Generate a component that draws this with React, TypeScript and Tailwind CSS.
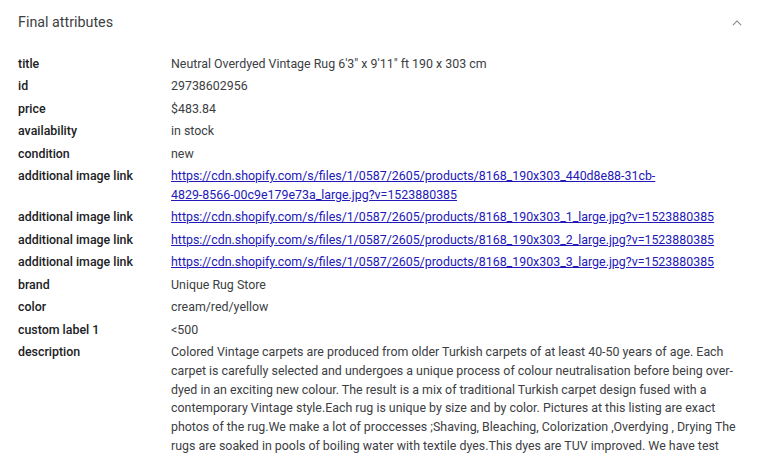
import React from "react";

type Row = { label: string; value: React.ReactNode; link?: boolean };

const rows: Row[] = [
  { label: "title", value: "Neutral Overdyed Vintage Rug 6'3\" x 9'11\" ft 190 x 303 cm" },
  { label: "id", value: "29738602956" },
  { label: "price", value: "$483.84" },
  { label: "availability", value: "in stock" },
  { label: "condition", value: "new" },
  {
    label: "additional image link",
    value: (
      <>
        https://cdn.shopify.com/s/files/1/0587/2605/products/8168_190x303_440d8e88-31cb-
        <br />
        4829-8566-00c9e179e73a_large.jpg?v=1523880385
      </>
    ),
    link: true,
  },
  {
    label: "additional image link",
    value: "https://cdn.shopify.com/s/files/1/0587/2605/products/8168_190x303_1_large.jpg?v=1523880385",
    link: true,
  },
  {
    label: "additional image link",
    value: "https://cdn.shopify.com/s/files/1/0587/2605/products/8168_190x303_2_large.jpg?v=1523880385",
    link: true,
  },
  {
    label: "additional image link",
    value: "https://cdn.shopify.com/s/files/1/0587/2605/products/8168_190x303_3_large.jpg?v=1523880385",
    link: true,
  },
  { label: "brand", value: "Unique Rug Store" },
  { label: "color", value: "cream/red/yellow" },
  { label: "custom label 1", value: "<500" },
  {
    label: "description",
    value:
      "Colored Vintage carpets are produced from older Turkish carpets of at least 40-50 years of age. Each carpet is carefully selected and undergoes a unique process of colour neutralisation before being over-dyed in an exciting new colour. The result is a mix of traditional Turkish carpet design fused with a contemporary Vintage style.Each rug is unique by size and by color. Pictures at this listing are exact photos of the rug.We make a lot of proccesses ;Shaving, Bleaching, Colorization ,Overdying , Drying The rugs are soaked in pools of boiling water with textile dyes.This dyes are TUV improved. We have test",
  },
];

export default function App() {
  return (
    <div
      className="w-[768px] h-[455px] overflow-hidden bg-white"
      style={{ fontFamily: "Roboto, 'Liberation Sans', sans-serif" }}
    >
      <div className="flex items-center justify-between pl-[18px] pr-[24px] pt-[6px] h-[40px]">
        <div className="text-[14.3px] text-[#3c4043]">Final attributes</div>
        <svg width="14" height="14" viewBox="0 0 24 24">
          <path d="M5 15.5 L12 8.5 L19 15.5" fill="none" stroke="#80868b" strokeWidth="2" />
        </svg>
      </div>
      <div className="flex flex-col gap-[3.7px] pl-[18px] pt-[15px] w-[742px] text-[12.4px] leading-[18.75px]">
        {rows.map((r, i) => (
          <div key={i} className="flex">
            <div className="w-[153px] shrink-0 font-medium text-[#202124]">{r.label}</div>
            <div className="flex-1 min-w-0 text-[#3c4043] break-words">
              {r.link ? (
                <a href="#" className="text-[#2318b8] underline whitespace-nowrap">
                  {r.value}
                </a>
              ) : (
                r.value
              )}
            </div>
          </div>
        ))}
      </div>
    </div>
  );
}
